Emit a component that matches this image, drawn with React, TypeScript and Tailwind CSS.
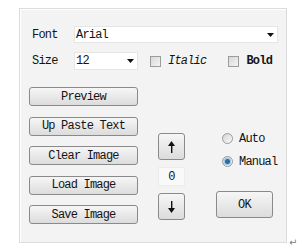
import React, { useState } from 'react';

const txt = "[font-family:'Liberation_Mono','Courier_New',monospace] text-[12px] tracking-[-0.8px] text-[#141414]";

const Caret = () => (
  <svg width="7" height="4" viewBox="0 0 7 4">
    <path d="M0 0h7L3.5 4z" fill="#111" />
  </svg>
);

const Arrow = ({ up }: { up: boolean }) => (
  <svg width="7" height="12" viewBox="0 0 7 12">
    {up ? (
      <>
        <path d="M3.5 0L7 5H0z" fill="#111" />
        <rect x="3" y="4" width="1.4" height="8" fill="#111" />
      </>
    ) : (
      <>
        <rect x="3" y="0" width="1.4" height="8" fill="#111" />
        <path d="M3.5 12L7 7H0z" fill="#111" />
      </>
    )}
  </svg>
);

const Btn = ({ label }: { label: string }) => (
  <button className={`w-[109px] h-[19px] rounded-[3px] border border-[#8a8a8a] bg-gradient-to-b from-[#f6f6f6] to-[#dcdcdc] flex items-center justify-center ${txt}`}>
    {label}
  </button>
);

const Check = () => (
  <span className="w-[11px] h-[11px] border border-[#9c9c9c] bg-gradient-to-br from-[#d8d8d8] to-[#f4f4f4]" />
);

const Radio = ({ on }: { on: boolean }) => (
  <span className="w-[11px] h-[11px] rounded-full border border-[#9a9a9a] bg-gradient-to-br from-[#d4d4d4] to-[#fafafa] flex items-center justify-center">
    {on && <span className="w-[5px] h-[5px] rounded-full bg-[#2c6e9a] shadow-[0_0_1px_1px_#8ec3e6]" />}
  </span>
);

export default function App() {
  const [mode, setMode] = useState('manual');
  const buttons = ['Preview', 'Up Paste Text', 'Clear Image', 'Load Image', 'Save Image'];

  return (
    <div className="w-[302px] h-[251px] bg-white pt-[8px] pl-[19px] relative">
      <div className="w-[268px] h-[235px] border border-[#dcdcdc] bg-[#f3f3f3] shadow-[inset_1px_1px_0_#ffffff] pl-[9px] pt-[17px]">
        <div className="flex items-center h-[17px]">
          <span className={`w-[45px] pl-[3px] ${txt}`}>Font</span>
          <div className="w-[204px] h-[17px] bg-white border border-[#e6e6e6] flex items-center justify-between pl-[1px] pr-[3px]">
            <span className={txt}>Arial</span>
            <Caret />
          </div>
        </div>
        <div className="flex items-center h-[18px] mt-[9px]">
          <span className={`w-[45px] pl-[3px] ${txt}`}>Size</span>
          <div className="w-[64px] h-[18px] bg-white border border-[#e6e6e6] flex items-center justify-between pl-[1px] pr-[3px]">
            <span className={txt}>12</span>
            <Caret />
          </div>
          <div className="ml-[12px] flex items-center gap-[7px]">
            <Check />
            <span className={`${txt} italic`}>Italic</span>
          </div>
          <div className="ml-[22px] flex items-center gap-[7px]">
            <Check />
            <span className={`${txt} font-bold`}>Bold</span>
          </div>
        </div>

        <div className="flex mt-[17px]">
          <div className="flex flex-col gap-[10.5px]">
            {buttons.map((b) => (
              <Btn key={b} label={b} />
            ))}
          </div>
          <div className="flex flex-col ml-[20px] mt-[46px] gap-[7px]">
            <button className="w-[27px] h-[27px] rounded-[3px] border border-[#8a8a8a] bg-gradient-to-b from-[#f6f6f6] to-[#dcdcdc] flex items-center justify-center">
              <Arrow up />
            </button>
            <div className={`w-[27px] h-[19px] border border-[#ececec] bg-[#f9f9f9] flex items-center justify-center ${txt}`}>0</div>
            <button className="w-[27px] h-[27px] rounded-[3px] border border-[#8a8a8a] bg-gradient-to-b from-[#f6f6f6] to-[#dcdcdc] flex items-center justify-center">
              <Arrow up={false} />
            </button>
          </div>
          <div className="flex flex-col ml-[31px] mt-[46px]">
            <label className="flex items-center gap-[6px] pl-[6px] h-[11px] cursor-pointer" onClick={() => setMode('auto')}>
              <Radio on={mode === 'auto'} />
              <span className={txt}>Auto</span>
            </label>
            <label className="flex items-center gap-[6px] pl-[6px] h-[11px] mt-[12px] cursor-pointer" onClick={() => setMode('manual')}>
              <Radio on={mode === 'manual'} />
              <span className={txt}>Manual</span>
            </label>
            <button className={`mt-[24px] w-[57px] h-[27px] rounded-[3px] border border-[#8a8a8a] bg-gradient-to-b from-[#f6f6f6] to-[#dcdcdc] flex items-center justify-center ${txt}`}>
              OK
            </button>
          </div>
        </div>
      </div>
      <span className="absolute left-[289px] top-[238px] text-[10px] leading-none text-[#808080] font-['DejaVu_Sans',sans-serif]">↵</span>
    </div>
  );
}
